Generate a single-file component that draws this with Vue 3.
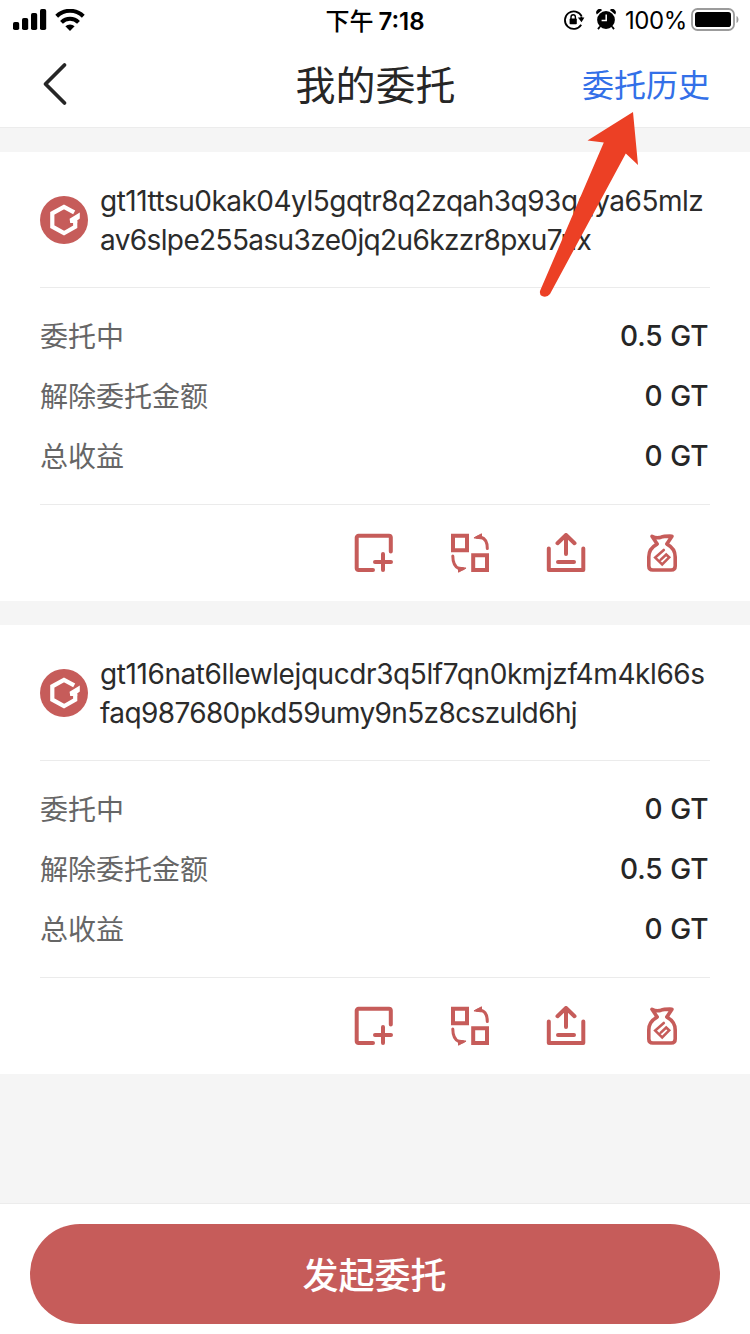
<script setup>
const delegations = [
  {
    address: ['gt11ttsu0kak04yl5gqtr8q2zqah3q93qqya65mlz', 'av6slpe255asu3ze0jq2u6kzzr8pxu7nx'],
    rows: [
      { label: '委托中', value: '0.5 GT' },
      { label: '解除委托金额', value: '0 GT' },
      { label: '总收益', value: '0 GT' },
    ],
  },
  {
    address: ['gt116nat6llewlejqucdr3q5lf7qn0kmjzf4m4kl66s', 'faq987680pkd59umy9n5z8cszuld6hj'],
    rows: [
      { label: '委托中', value: '0 GT' },
      { label: '解除委托金额', value: '0.5 GT' },
      { label: '总收益', value: '0 GT' },
    ],
  },
]
</script>

<template>
  <div class="page">
    <header class="status">
      <div class="status-left">
        <svg class="signal" width="34" height="22" viewBox="0 0 34 22">
          <rect x="0" y="13" width="6.2" height="8" rx="1.8" />
          <rect x="9" y="9" width="6.2" height="12" rx="1.8" />
          <rect x="18" y="4" width="6.2" height="17" rx="1.8" />
          <rect x="27" y="0" width="6.2" height="21" rx="1.8" />
        </svg>
        <svg class="wifi" width="30" height="22" viewBox="0 0 30 22">
          <path d="M1.7 7.2a19 19 0 0 1 26.6 0" fill="none" stroke="#000" stroke-width="4" />
          <path d="M6.5 13.3a12 12 0 0 1 17 0" fill="none" stroke="#000" stroke-width="4" />
          <path d="M10.4 17.3a6.8 6.8 0 0 1 9.2 0L15 21.9z" />
        </svg>
      </div>
      <div class="clock"><span class="ampm">下午</span><span>7:18</span></div>
      <div class="status-right">
        <svg class="lock" width="24" height="22" viewBox="0 0 24 22">
          <path d="M18.2 15.8A8.8 8.8 0 1 1 18.6 7.2" fill="none" stroke="#000" stroke-width="1.8" />
          <path d="M14.9 8.6h6.5l-2.9 4.6z" />
          <path d="M18.4 7.4v3" stroke="#000" stroke-width="1.8" />
          <rect x="6.6" y="9.6" width="7.2" height="5.6" rx=".8" />
          <path d="M8 10V8a2.2 2.2 0 0 1 4.4 0v2" fill="none" stroke="#000" stroke-width="1.4" />
        </svg>
        <svg class="alarm" width="20" height="22" viewBox="0 0 20 22">
          <circle cx="10" cy="11" r="8.9" />
          <path d="M.8 5.4A3.5 3.5 0 0 1 6.2 1zM19.2 5.4A3.5 3.5 0 0 0 13.8 1z" />
          <path d="M4 17.5l-2 2.6M16 17.5l2 2.6" stroke="#000" stroke-width="1.8" />
          <path d="M10.2 5.5v6H5.6" fill="none" stroke="#fff" stroke-width="1.5" />
        </svg>
        <span class="percent">100%</span>
        <svg class="battery" width="48" height="24" viewBox="0 0 48 24">
          <rect x="1" y="1" width="42" height="21" rx="5.5" fill="none" stroke="#9b9b9b" stroke-width="1.8" />
          <rect x="4" y="4" width="36" height="15" rx="2.8" />
          <path d="M45.5 8c2.6 1 2.6 6 0 7z" fill="#9b9b9b" />
        </svg>
      </div>
    </header>

    <nav class="nav">
      <svg class="back" width="26" height="44" viewBox="0 0 26 44">
        <path d="M22.5 3L3.5 22l19 19" fill="none" stroke="#262626" stroke-width="3.8" stroke-linecap="round" stroke-linejoin="round" />
      </svg>
      <h1 class="title">我的委托</h1>
      <a class="history">委托历史</a>
    </nav>

    <main class="list">
      <section v-for="(item, index) in delegations" :key="index" class="card">
        <div class="account">
          <svg class="logo" width="48" height="48" viewBox="0 0 48 48">
            <circle cx="24" cy="24" r="24" fill="#c65c5a" />
            <path d="M34.2 16.4L24 10.8 12.3 17.3v13.4L24 37.2l11.2-6.5V25" fill="none" stroke="#fff" stroke-width="4.2" />
            <path d="M29.6 22.8L39.8 16.5V22.6L37.2 24.5V27H30.2z" fill="#fff" />
          </svg>
          <div class="address" :class="'address-' + index">
            <span v-for="line in item.address" :key="line" class="line">{{ line }}</span>
          </div>
        </div>
        <dl class="amounts">
          <div v-for="row in item.rows" :key="row.label" class="row">
            <dt>{{ row.label }}</dt>
            <dd>{{ row.value }}</dd>
          </div>
        </dl>
        <div class="actions">
          <svg viewBox="0 0 40 40">
            <path d="M19 37H4.5A1.8 1.8 0 0 1 2.7 35.2V4.6A1.8 1.8 0 0 1 4.5 2.8H35A1.8 1.8 0 0 1 36.8 4.6V18.5M21 29H37M29 21V37" />
          </svg>
          <svg viewBox="0 0 40 40">
            <path d="M3 2.7H17V17.3H3zM23.2 22.3H37V37H23.2z" class="square" />
            <path d="M27 4.3H31Q37.3 6 37.3 15.5M13 35.7H9Q2.8 33 2.8 23" class="arc" />
            <path d="M24.3 4.7L31.5.8V5.5zM15.7 35.3L8.5 39.2V34.5z" class="solid" />
          </svg>
          <svg viewBox="0 0 40 40">
            <path d="M2.8 15.5V37H37.3V15.5M12 29H28M20 21V2.5M11.5 10.2L20 2L28.5 10.2" />
          </svg>
          <svg viewBox="0 0 40 40">
            <path d="M15 10.7L10 3.3Q14.5 5.6 19 4.2Q22 3 30 3.2L25 10.7" class="thin" />
            <path d="M15 11.2C9 14.5 6.8 19 6.8 24V33Q6.8 37 10.8 37H29.2Q33.2 37 33.2 33V24C33.200 19 31 14.5 25 11.2" class="thin" />
            <path d="M21.8 17L13.200 24.600L20.200 31.500L27.200 24.300L24.200 21.500L18.800 26.600" class="mark" />
          </svg>
        </div>
      </section>
    </main>

    <footer class="footer">
      <button class="submit">发起委托</button>
    </footer>

    <svg class="pointer" width="104" height="190" viewBox="0 0 104 190">
      <path d="M95 2L49.5 30.5L65.8 32.5L2.1 180.8Q1.2 184.5 4 186.1Q8.5 188.3 12 184L87.8 43.5L100 55z" fill="#ec4025" />
    </svg>
  </div>
</template>

<style>
body {
  margin: 0;
}
</style>

<style scoped>
.page {
  position: relative;
  display: flex;
  flex-direction: column;
  width: 750px;
  height: 1334px;
  overflow: hidden;
  background: #f5f5f5;
  color: #262626;
  font-family: Inter, "Noto Sans CJK SC", sans-serif;
}
.status {
  display: grid;
  grid-template-columns: 1fr auto 1fr;
  align-items: center;
  height: 40px;
  background: #fff;
  color: #000;
}
.status-left,
.status-right {
  display: flex;
  align-items: center;
}
.status-left {
  padding-left: 13px;
  gap: 8px;
}
.status-right {
  justify-content: flex-end;
  padding-right: 11px;
}
.alarm {
  margin-left: 9px;
}
.clock {
  display: flex;
  align-items: center;
  gap: 5px;
  padding-top: 3px;
  font-size: 24px;
  font-weight: 600;
  line-height: 37px;
}
.ampm {
  font-weight: 500;
}
.percent {
  margin: 1px 4px 0 9px;
  font-size: 24px;
  letter-spacing: -0.4px;
}
.nav {
  display: grid;
  grid-template-columns: 1fr auto 1fr;
  align-items: center;
  box-sizing: border-box;
  height: 88px;
  padding: 0 40px 0 42px;
  border-bottom: 1px solid #ececec;
  background: #fff;
}
.title {
  margin: 0;
  padding: 5px 1px 0 0;
  font-size: 40px;
  font-weight: 400;
  line-height: 60px;
}
.history {
  justify-self: end;
  padding-top: 5px;
  color: #3370e8;
  font-size: 32px;
  line-height: 48px;
}
.list {
  display: flex;
  flex: 1;
  flex-direction: column;
  gap: 24px;
  padding-top: 24px;
}
.card {
  box-sizing: border-box;
  height: 449px;
  padding: 0 40px;
  background: #fff;
}
.account {
  display: flex;
  align-items: center;
  gap: 12px;
  box-sizing: border-box;
  height: 136px;
  border-bottom: 1px solid #ebebeb;
}
.logo {
  flex: none;
}
.address {
  padding-top: 3px;
  color: #2b2b2b;
  font-size: 28px;
  line-height: 39px;
  white-space: nowrap;
}
.line {
  display: block;
  letter-spacing: -0.5px;
}
.line:last-child {
  letter-spacing: -0.62px;
}
.address-1 .line:first-child {
  letter-spacing: -0.41px;
}
.amounts {
  margin: 0;
  padding: 18px 0;
  border-bottom: 1px solid #ebebeb;
}
.row {
  display: flex;
  align-items: center;
  justify-content: space-between;
  height: 60px;
}
dt {
  padding-bottom: 3px;
  color: #666;
  font-size: 28px;
}
dd {
  margin: 0;
  padding-right: 1.5px;
  font-size: 28px;
  font-weight: 500;
}
.actions {
  display: flex;
  align-items: center;
  justify-content: flex-end;
  gap: 56px;
  height: 96px;
  padding-right: 28px;
}
.actions svg {
  width: 40px;
  height: 40px;
  fill: none;
  stroke: #c65c5a;
  stroke-width: 4;
  stroke-linecap: round;
  stroke-linejoin: round;
}
.actions .square {
  stroke-linejoin: miter;
}
.actions .arc {
  stroke-width: 3;
}
.actions .solid {
  fill: #c65c5a;
  stroke-width: 1;
}
.actions .thin {
  stroke-width: 3.6;
}
.actions .mark {
  stroke-width: 2.6;
  stroke-linejoin: miter;
}
.footer {
  box-sizing: border-box;
  height: 131px;
  padding: 20px 30px 10px;
  border-top: 1px solid #ececec;
  background: #fff;
}
.submit {
  display: block;
  width: 100%;
  height: 100px;
  padding: 0 1px 3px 0;
  border: 0;
  border-radius: 50px;
  background: #c65c5a;
  color: #fff;
  font-family: inherit;
  font-size: 36px;
  font-weight: 500;
}
.pointer {
  position: absolute;
  top: 110px;
  left: 538px;
}
</style>
